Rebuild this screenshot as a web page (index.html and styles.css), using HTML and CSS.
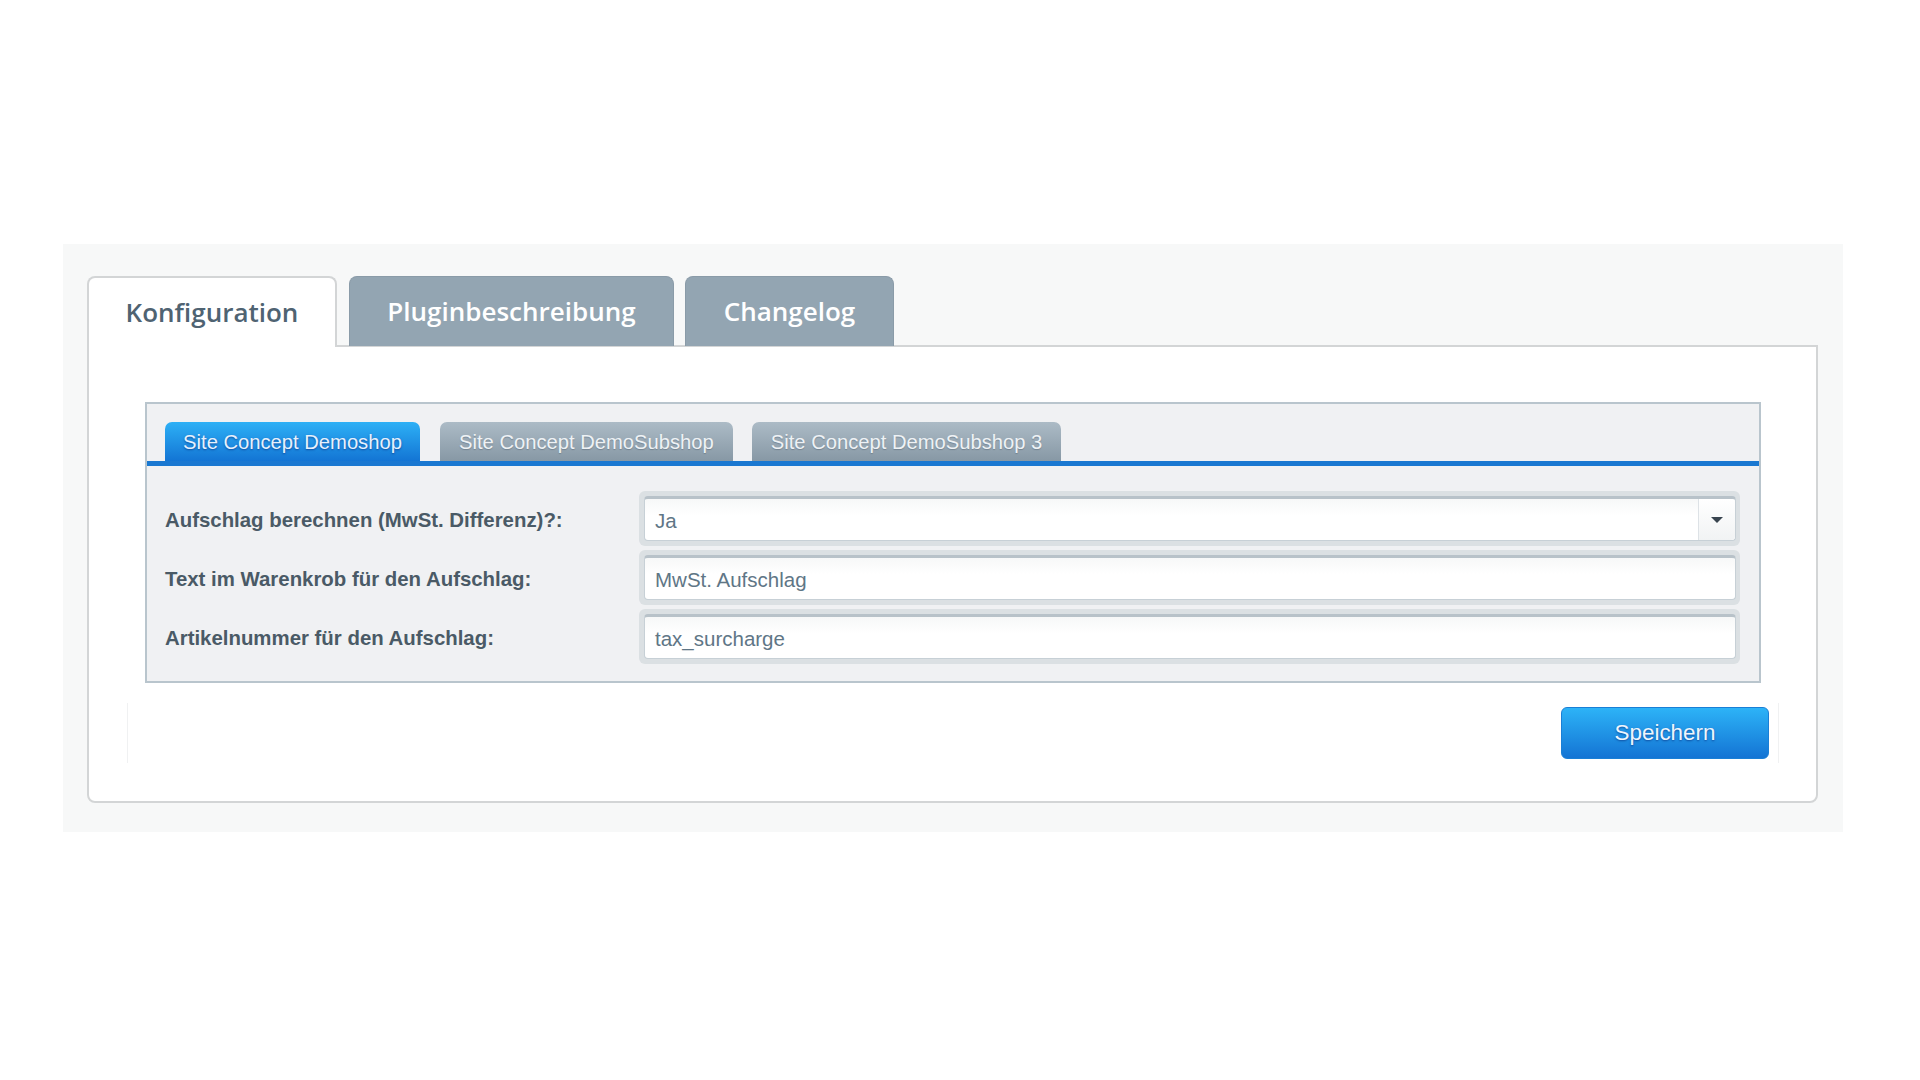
FILE: index.html
```html
<!DOCTYPE html>
<html lang="de">
<head>
<meta charset="utf-8">
<title>Plugin Konfiguration</title>
<link rel="stylesheet" href="styles.css">
</head>
<body>
<div class="page">
  <div class="outer">
    <div class="main-tabs">
      <div class="main-tab active">Konfiguration</div>
      <div class="main-tab t2">Pluginbeschreibung</div>
      <div class="main-tab t3">Changelog</div>
    </div>
    <div class="content">
      <div class="shop-box">
        <div class="sub-tabs">
          <div class="sub-tab active">Site Concept Demoshop</div>
          <div class="sub-tab">Site Concept DemoSubshop</div>
          <div class="sub-tab">Site Concept DemoSubshop 3</div>
        </div>
        <div class="form">
          <div class="row">
            <div class="label">Aufschlag berechnen (MwSt. Differenz)?:</div>
            <div class="field">
              <div class="field-inner select">
                <span class="value">Ja</span>
                <span class="arrow"><svg width="14" height="8" viewBox="0 0 14 8"><path d="M1 1 L13 1 L7 7 Z" fill="#38444f"/></svg></span>
              </div>
            </div>
          </div>
          <div class="row">
            <div class="label">Text im Warenkrob für den Aufschlag:</div>
            <div class="field">
              <div class="field-inner"><span class="value">MwSt. Aufschlag</span></div>
            </div>
          </div>
          <div class="row">
            <div class="label">Artikelnummer für den Aufschlag:</div>
            <div class="field">
              <div class="field-inner"><span class="value">tax_surcharge</span></div>
            </div>
          </div>
        </div>
      </div>
      <div class="toolbar">
        <button class="save">Speichern</button>
      </div>
    </div>
  </div>
</div>
</body>
</html>
```
FILE: styles.css
```css
html, body {
  margin: 0;
  padding: 0;
  background: #ffffff;
}
.page {
  padding: 244px 0 0 63px;
}
.outer {
  width: 1780px;
  height: 588px;
  box-sizing: border-box;
  background: #f7f8f8;
  padding: 32px 25px 0 24px;
}
.main-tabs {
  display: flex;
  align-items: flex-end;
  height: 70px;
  position: relative;
  z-index: 2;
}
.main-tab {
  height: 70px;
  box-sizing: border-box;
  border-radius: 8px 8px 0 0;
  font-family: "Open Sans", sans-serif;
  font-weight: 600;
  font-size: 26px;
  color: #ffffff;
  background: #93a5b2;
  display: flex;
  align-items: center;
  justify-content: center;
  padding-bottom: 2px;
  border: 1px solid #8a9ba8;
  border-bottom: none;
}
.main-tab.active {
  width: 250px;
  height: 71px;
  margin-bottom: -1px;
  background: #ffffff;
  color: #4f6372;
  border: 2px solid #d3d5d6;
  border-bottom: none;
  padding-bottom: 1px;
}
.main-tab.t2 {
  width: 325px;
  margin-left: 12px;
}
.main-tab.t3 {
  width: 209px;
  margin-left: 11px;
}
.content {
  width: 1731px;
  height: 458px;
  box-sizing: border-box;
  margin-top: -1px;
  background: #ffffff;
  border: 2px solid #d3d5d6;
  border-radius: 0 0 8px 8px;
  padding: 55px 0 0 56px;
}
.shop-box {
  width: 1616px;
  height: 281px;
  box-sizing: border-box;
  background: #f0f1f3;
  border: 2px solid #b9c5cd;
}
.sub-tabs {
  display: flex;
  gap: 19px;
  padding: 18px 0 0 18px;
  border-bottom: 5px solid #1a78d1;
}
.sub-tab {
  height: 39px;
  box-sizing: border-box;
  padding: 1px 19px 0 19px;
  border-radius: 7px 7px 0 0;
  font-family: "Liberation Sans", Arial, sans-serif;
  font-size: 20.2px;
  line-height: 38px;
  color: #eef2f5;
  background: linear-gradient(#acbbc6, #8798a5);
  text-shadow: 0 1px 1px rgba(60, 75, 90, 0.35);
  white-space: nowrap;
}
.sub-tab.active {
  width: 255px;
  margin-right: 1px;
  text-align: center;
  padding: 1px 0 0 0;
  color: #e6f1fd;
  background: linear-gradient(#2db0f6, #1375d4);
  text-shadow: 0 1px 2px rgba(10, 50, 130, 0.7);
}
.form {
  padding: 25px 18px 0 18px;
  display: flex;
  flex-direction: column;
  gap: 4px;
}
.row {
  display: flex;
  align-items: center;
  min-height: 55px;
}
.label {
  width: 474px;
  font-family: "Liberation Sans", Arial, sans-serif;
  font-weight: bold;
  font-size: 20.4px;
  color: #4a5a66;
  white-space: nowrap;
  padding-top: 3px;
}
.field {
  width: 1101px;
  height: 55px;
  box-sizing: border-box;
  background: #dbe0e3;
  border-radius: 6px;
  padding: 5px 4px 5px 5px;
}
.field-inner {
  height: 100%;
  box-sizing: border-box;
  background: linear-gradient(#f7f8f8, #ffffff 40%);
  border: 1px solid #c7d0d6;
  border-top: 3px solid #b8c2c9;
  border-radius: 4px;
  display: flex;
  align-items: center;
  padding-left: 10px;
}
.value {
  flex: 1;
  font-family: "Liberation Sans", Arial, sans-serif;
  font-size: 20.5px;
  color: #607686;
  padding-top: 2px;
}
.arrow {
  width: 36px;
  align-self: stretch;
  border-left: 1px solid #dde2e6;
  background: linear-gradient(#ffffff, #f1f3f4);
  display: flex;
  align-items: center;
  justify-content: center;
  border-radius: 0 4px 4px 0;
}
.toolbar {
  width: 1652px;
  height: 60px;
  box-sizing: border-box;
  margin: 20px 0 0 -18px;
  border-left: 1px solid #f0f1f2;
  border-right: 1px solid #f0f1f2;
  display: flex;
  justify-content: flex-end;
  align-items: flex-start;
  padding: 4px 9px 0 0;
}
.save {
  width: 208px;
  height: 52px;
  border: 1px solid #1a7fd6;
  border-radius: 6px;
  background: linear-gradient(#2db3f7, #1474d4);
  font-family: "Liberation Sans", Arial, sans-serif;
  font-size: 22.4px;
  color: #eef5fd;
  text-shadow: 0 1px 2px rgba(10, 50, 130, 0.7);
  padding: 0;
}
```
